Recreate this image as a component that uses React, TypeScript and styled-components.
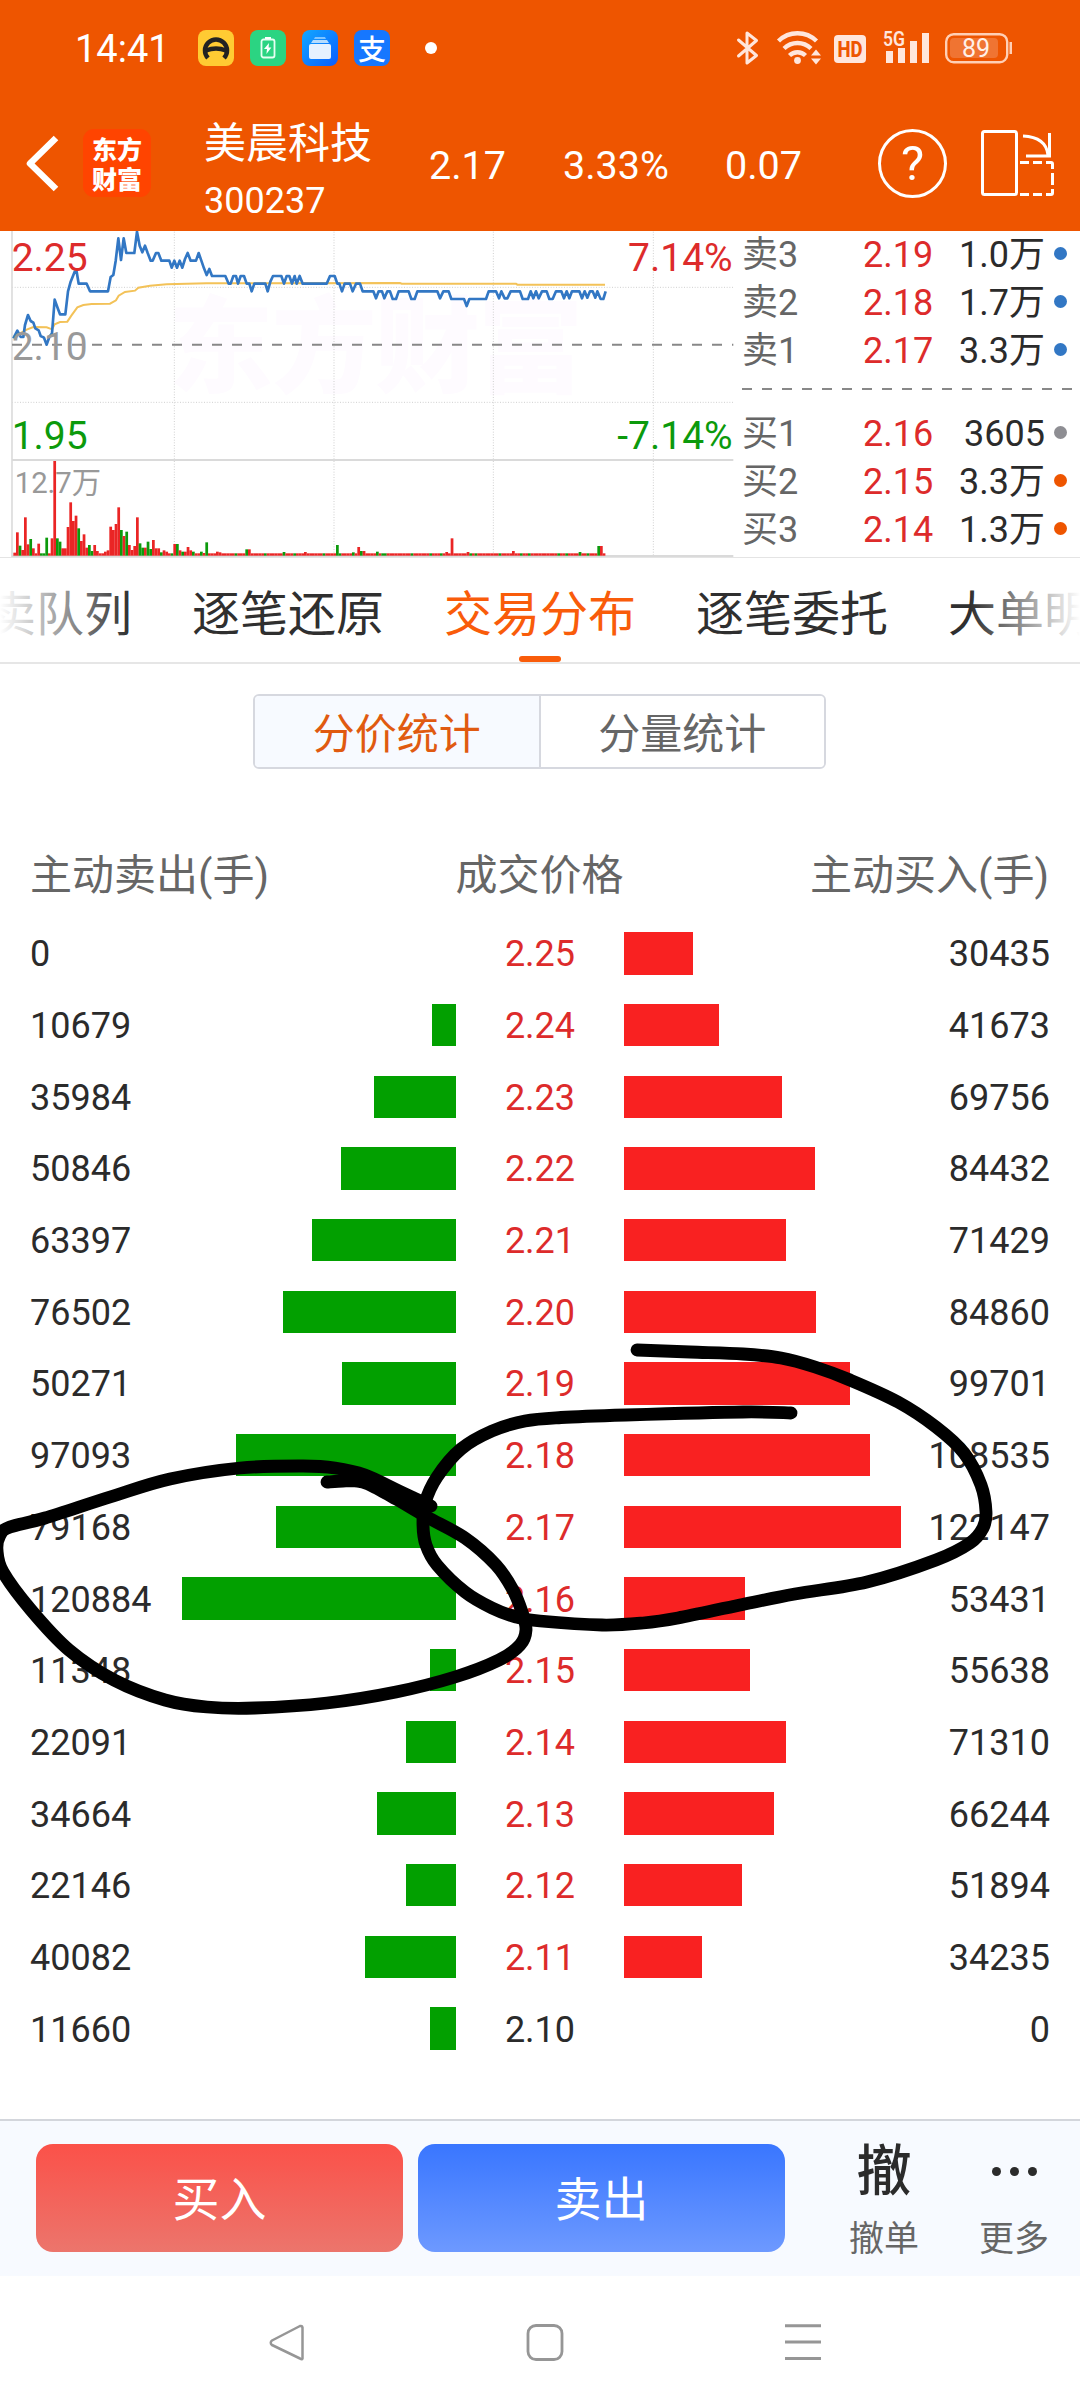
import React from "react";
import styled, { createGlobalStyle } from "styled-components";

const GlobalStyle = createGlobalStyle`
  * { box-sizing: border-box; }
  body {
    margin: 0;
    background: #fff;
    font-family: Roboto, "Noto Sans CJK SC", sans-serif;
    color: #2b2b2b;
  }
`;

const Screen = styled.div`
  position: relative;
  display: flex;
  flex-direction: column;
  width: 1080px;
  height: 2408px;
  overflow: hidden;
  background: #fff;
`;

/* ---------- status bar ---------- */

const Top = styled.header`
  height: 231px;
  flex: none;
  background: #ee5500;
  color: #fff;
`;

const StatusBar = styled.div`
  display: flex;
  justify-content: space-between;
  align-items: center;
  height: 96px;
  padding: 0 66px 0 75px;
`;

const Cluster = styled.div`
  display: flex;
  align-items: center;
`;

const Clock = styled.span`
  width: 123px;
  font-size: 38px;
  line-height: 96px;
  padding-top: 2px;
`;

const AppBadges = styled.div`
  display: flex;
  gap: 16px;
`;

const AppBadge = styled.div<{ $bg: string }>`
  width: 36px;
  height: 36px;
  border-radius: 8px;
  background: ${(p) => p.$bg};
  display: flex;
  align-items: center;
  justify-content: center;
  svg { display: block; }
`;

const PayGlyph = styled.span`
  font: 500 28px/34px "Noto Sans CJK SC", sans-serif;
`;

const Dot = styled.i<{ $size: number; $color: string }>`
  display: block;
  flex: none;
  width: ${(p) => p.$size}px;
  height: ${(p) => p.$size}px;
  border-radius: 50%;
  background: ${(p) => p.$color};
`;

const NoticeDot = styled(Dot)`
  margin-left: 35px;
`;

/* ---------- title bar ---------- */

const TitleBar = styled.div`
  display: flex;
  align-items: center;
  height: 134px;
  padding-left: 23px;
`;

const Logo = styled.div`
  width: 68px;
  height: 68px;
  margin-left: 22px;
  padding-top: 4px;
  border-radius: 11px;
  background: #ff4400;
  text-align: center;
  font: 900 25px/30px "Noto Sans CJK SC", sans-serif;
`;

const Stock = styled.div`
  width: 225px;
  margin-left: 53px;
  padding-top: 18px;
`;

const StockName = styled.div`
  font-size: 42px;
  line-height: 58px;
`;

const StockCode = styled.div`
  font-size: 36px;
  line-height: 56px;
`;

const Quote = styled.span<{ $width: number }>`
  width: ${(p) => p.$width}px;
  font-size: 39.5px;
  line-height: 60px;
  padding-top: 5px;
`;

const Help = styled.div`
  width: 69px;
  height: 69px;
  border: 3px solid #fff;
  border-radius: 50%;
  text-align: center;
  font-size: 49px;
  line-height: 64px;
`;

const RotateIcon = styled.svg`
  margin-left: 33px;
`;

/* ---------- quote panel ---------- */

const QuotePanel = styled.section`
  display: flex;
  flex: none;
  height: 327px;
  border-bottom: 1px solid #e4e4e4;
`;

const OrderBook = styled.div`
  width: 340px;
  padding: 0 4px 0 2px;
`;

const OrderRow = styled.div`
  display: grid;
  grid-template-columns: 121px 91px 91px 1fr;
  align-items: center;
  height: 48px;
  font-size: 36px;
  line-height: 48px;
`;

const OrderSide = styled.span`
  color: #666;
`;

const OrderPrice = styled.span`
  color: #dd2b2b;
`;

const OrderVolume = styled.span`
  text-align: right;
`;

const OrderDot = styled(Dot)`
  margin: -4px 0 0 9px;
`;

const OrderDivider = styled.div`
  height: 2px;
  margin: 13px 0 20px;
  background: repeating-linear-gradient(90deg, #888 0 10px, transparent 10px 20px);
`;

/* ---------- tabs ---------- */

const Tabs = styled.nav`
  position: relative;
  display: flex;
  justify-content: center;
  gap: 60px;
  flex: none;
  height: 106px;
  border-bottom: 2px solid #e6e6e6;
  overflow: hidden;
  &::before, &::after {
    content: "";
    position: absolute;
    z-index: 1;
    top: 0;
    bottom: 0;
    width: 130px;
  }
  &::before { left: 0; background: linear-gradient(90deg, #fff, rgba(255,255,255,0)); }
  &::after { right: 0; width: 110px; background: linear-gradient(270deg, #fff, rgba(255,255,255,0)); }
`;

const Tab = styled.div<{ $active?: boolean }>`
  display: flex;
  flex-direction: column;
  align-items: center;
  justify-content: space-between;
  flex: none;
  width: 192px;
  white-space: nowrap;
  font-size: 48px;
  line-height: 70px;
  padding-top: 22px;
  color: ${(p) => (p.$active ? "#f95c0a" : "#2f2f2f")};
`;

const TabMark = styled.i`
  width: 42px;
  height: 6px;
  border-radius: 3px;
  background: #f95c0a;
`;

/* ---------- segmented control ---------- */

const Segments = styled.div`
  display: flex;
  flex: none;
  width: 573px;
  height: 75px;
  margin: 30px auto 0 253px;
  border: 2px solid #d6d8df;
  border-radius: 6px;
  overflow: hidden;
`;

const Segment = styled.div<{ $active?: boolean }>`
  flex: 1;
  text-align: center;
  font-size: 42px;
  line-height: 78px;
  color: ${(p) => (p.$active ? "#e05a10" : "#666")};
  background: ${(p) => (p.$active ? "#f7faff" : "#fff")};
  & + & { border-left: 2px solid #d6d8df; }
`;

/* ---------- distribution ---------- */

const ColumnHeads = styled.div`
  display: grid;
  grid-template-columns: 1fr 200px 1fr;
  flex: none;
  padding: 0 31px 0 30px;
  margin-top: 76px;
  font-size: 42px;
  line-height: 62px;
  color: #666;
  span:nth-child(2) { text-align: center; }
  span:nth-child(3) { text-align: right; }
`;

const Levels = styled.div`
  flex: none;
  margin-top: 10.5px;
`;

const Level = styled.div`
  display: grid;
  grid-template-columns: 151px 275px 168px 277px 149px;
  align-items: center;
  height: 71.7px;
  padding: 0 30px;
  font-size: 36px;
  line-height: 42px;
`;

const Amount = styled.span<{ $right?: boolean }>`
  padding-top: 2px;
  text-align: ${(p) => (p.$right ? "right" : "left")};
`;

const Price = styled.span<{ $flat?: boolean }>`
  padding-top: 2px;
  text-align: center;
  color: ${(p) => (p.$flat ? "#2b2b2b" : "#dd2b2b")};
`;

const Bar = styled.i<{ $sell?: boolean }>`
  display: block;
  height: 42.4px;
  background: ${(p) => (p.$sell ? "#02a000" : "#f92121")};
  justify-self: ${(p) => (p.$sell ? "end" : "start")};
`;

/* ---------- bottom ---------- */

const ActionBar = styled.footer`
  display: flex;
  flex: none;
  height: 157px;
  margin-top: auto;
  padding: 23px 0 0 36px;
  border-top: 2px solid #d3d6dc;
  background: #f7faff;
`;

const TradeButton = styled.div<{ $from: string; $to: string }>`
  width: 367px;
  height: 108px;
  margin-right: 15px;
  border-radius: 17px;
  background: linear-gradient(${(p) => p.$from}, ${(p) => p.$to});
  color: #fff;
  text-align: center;
  font-size: 47px;
  line-height: 112px;
`;

const Action = styled.div<{ $left: number }>`
  display: flex;
  flex-direction: column;
  align-items: center;
  width: 72px;
  margin-left: ${(p) => p.$left}px;
`;

const ActionIcon = styled.div`
  display: flex;
  align-items: center;
  justify-content: center;
  gap: 9px;
  height: 54px;
  font-size: 55px;
  font-weight: 500;
  line-height: 54px;
`;

const ActionLabel = styled.div`
  margin-top: 17px;
  font-size: 35px;
  line-height: 50px;
  color: #666;
`;

const SystemNav = styled.div`
  display: flex;
  flex: none;
  justify-content: space-between;
  height: 132px;
  padding: 48px 258px 0 268px;
`;

const Ink = styled.svg`
  position: absolute;
  left: 0;
  top: 0;
  pointer-events: none;
`;

/* ---------- data ---------- */

const asks = [["卖3", "2.19", "1.0万"], ["卖2", "2.18", "1.7万"], ["卖1", "2.17", "3.3万"]];
const bids = [["买1", "2.16", "3605"], ["买2", "2.15", "3.3万"], ["买3", "2.14", "1.3万"]];

const levels: [number, string, number][] = [
  [0, "2.25", 30435], [10679, "2.24", 41673], [35984, "2.23", 69756], [50846, "2.22", 84432],
  [63397, "2.21", 71429], [76502, "2.20", 84860], [50271, "2.19", 99701], [97093, "2.18", 108535],
  [79168, "2.17", 122147], [120884, "2.16", 53431], [11348, "2.15", 55638], [22091, "2.14", 71310],
  [34664, "2.13", 66244], [22146, "2.12", 51894], [40082, "2.11", 34235], [11660, "2.10", 0],
];
const barWidth = (n: number) => (n / 122147) * 277;

/* Chart units: three per pixel, one minute every eight units. */
const priceLine =
  "40,340 52,317 62,336 70,336 75,300 84,270 92,288 100,293 106,310 116,316 122,333 132,338 140,359 148,336 156,325 164,224 174,252 180,268 196,268 204,199 212,170 224,140 230,140 236,176 260,176 270,199 324,199 332,156 340,150 347,108 355,40 363,105 371,40 379,84 403,84 411,20 419,62 427,82 435,62 443,84 452,107 458,107 468,84 475,84 484,107 508,107 515,128 523,107 531,128 539,107 547,128 555,102 563,84 572,107 588,107 596,84 604,107 612,130 620,150 628,132 636,153 676,153 686,176 692,176 700,153 708,153 714,176 722,153 732,153 740,176 748,176 755,199 763,176 796,176 803,199 811,170 819,153 844,153 852,176 860,153 868,153 876,176 884,153 890,176 899,153 908,176 980,176 990,153 1004,153 1012,176 1018,176 1026,199 1034,176 1050,176 1058,199 1068,176 1080,176 1088,199 1120,199 1128,220 1136,199 1146,199 1153,220 1162,199 1170,199 1178,222 1188,222 1196,199 1226,199 1234,222 1244,222 1252,199 1312,199 1320,220 1330,199 1346,199 1354,222 1392,222 1400,243 1408,222 1458,222 1466,199 1488,199 1497,220 1504,199 1514,220 1522,220 1532,199 1560,199 1568,222 1584,222 1592,199 1600,220 1608,199 1616,220 1626,199 1640,199 1648,222 1658,222 1668,199 1684,199 1692,220 1700,199 1708,220 1716,199 1738,199 1746,220 1754,199 1762,218 1770,199 1778,199 1786,218 1792,199 1802,222 1810,222 1817,199";
const averageLine =
  "40,336 60,325 80,314 100,306 140,307 156,313 164,298 180,291 202,290 214,272 232,247 250,240 275,237 330,236 348,226 356,212 375,201 405,197 415,188 450,182 500,178 620,175 1200,174 1205,176 1548,176 1552,179 1815,179";

const opening =
  "9r 70r 30g 17r 115r 34r 50g 22r 7r 36r 7g 7g 54g 7r 52r 284r 52g 42g 22r 22r 86r 160r 104r 120r 82g 44r 64r 24r 32g 14g 32r 14r 7r 7r 12r 16r 87r 77r 95r 145r 77g 59r 72g 32r 17r 29r 115r 37g 24g 24r 42g 20g 47r 22r 22r 10g 16r 12r 7r 7g 35r 35g 16r 12g 12r 26r 16r 12g 7r 7r 12g 8r 40g".split(" ");
const later: Record<number, string> = {
  76: "12r", 77: "10r", 87: "19g", 88: "19r", 101: "11g", 109: "11r", 121: "32g", 127: "10g",
  129: "26r", 130: "14g", 131: "14r", 136: "12g", 162: "11r", 164: "52r", 170: "11r", 187: "14r",
  212: "11g", 219: "29g", 220: "29r",
};
const volumes = Array.from({ length: 222 }, (_, i) =>
  opening[i] ?? later[i] ?? (i % 11 === 6 || i % 17 === 3 ? "7g" : "7r")
);

type Pt = [number, number];
const leftLoop: Pt[] = [
  [327, 1482], [343, 1481], [355, 1481], [368, 1484], [396, 1499], [427, 1517], [465, 1538], [496, 1565], [513, 1590],
  [522, 1612], [526, 1630], [520, 1645], [499, 1660], [455, 1677], [396, 1692], [327, 1703], [255, 1708],
  [207, 1707], [165, 1700], [114, 1680], [69, 1650], [31, 1610], [3, 1572], [-3, 1550], [0, 1535], [10, 1527],
  [45, 1518], [110, 1497], [170, 1479], [240, 1468], [303, 1466], [335, 1468], [365, 1475], [399, 1491], [431, 1506],
];
const rightLoop: Pt[] = [
  [637, 1350], [690, 1352], [743, 1354], [781, 1358], [815, 1367], [850, 1380], [898, 1402], [936, 1427],
  [964, 1453], [981, 1485], [986, 1512], [983, 1528], [970, 1543], [936, 1560], [867, 1582], [795, 1594],
  [740, 1605], [678, 1618], [643, 1623], [602, 1625], [540, 1621], [516, 1617], [492, 1608], [465, 1592],
  [437, 1565], [426, 1545], [423, 1525], [425, 1503], [437, 1477], [461, 1449], [492, 1431], [525, 1421],
  [561, 1417.5], [626, 1415], [743, 1412], [791, 1413],
];

function smooth(pts: Pt[]) {
  let d = `M${pts[0]}`;
  for (let i = 0; i < pts.length - 1; i++) {
    const a = pts[i - 1] ?? pts[i];
    const b = pts[i];
    const c = pts[i + 1];
    const e = pts[i + 2] ?? c;
    d += `C${b[0] + (c[0] - a[0]) / 6},${b[1] + (c[1] - a[1]) / 6} ${c[0] - (e[0] - b[0]) / 6},${c[1] - (e[1] - b[1]) / 6} ${c}`;
  }
  return d;
}

/* ---------- parts ---------- */

function StatusIcons() {
  return (
    <svg width="280" height="40" viewBox="736 28 280 40" fill="none">
      <path d="M740.500 40l18 15.500-9.500 7.500v-30l9.500 7.500-18 15.500" stroke="#ffe6dc" strokeWidth="3" strokeLinejoin="round" strokeLinecap="round" />
      <g stroke="#ffe6dc" strokeWidth="4.400">
        <path d="M780.500 41a27 27 0 0 1 38 0" />
        <path d="M786 48.500a19.500 19.500 0 0 1 27 0" />
        <path d="M791.500 55.500a11.500 11.500 0 0 1 16 0" />
      </g>
      <circle cx="799.500" cy="60.500" r="3.400" fill="#ffe6dc" />
      <path d="M813 55.500l5-6 5 6zM813 58.500l5 6 5-6z" fill="#ffe6dc" />
      <rect x="836" y="35" width="32" height="28" rx="4" fill="#ffe6dc" />
      <text x="852" y="57" textAnchor="middle" fontSize="22" fontWeight="800" fill="#ee5500" textLength="25" lengthAdjust="spacingAndGlyphs">HD</text>
      <text x="885" y="46" fontSize="21" fontWeight="600" fill="#ffe6dc" textLength="22" lengthAdjust="spacingAndGlyphs">5G</text>
      <path d="M888 51h7v12h-7zM900 48h7v15h-7zM912 41h7v22h-7zM924 33h7v30h-7z" fill="#ffe6dc" />
      <rect x="948.200" y="34.200" width="61" height="28" rx="7.500" stroke="#ffcfb5" strokeWidth="2.400" />
      <rect x="952" y="38" width="48" height="20" rx="4" fill="#f07432" />
      <rect x="1011.500" y="42" width="2.500" height="12" fill="#ffcfb5" />
      <text x="978" y="57" textAnchor="middle" fontSize="25" fill="#fff0e8">89</text>
    </svg>
  );
}

function Chart() {
  return (
    <svg width="740" height="326" viewBox="0 18 2220 978" fill="none">
      <text x="505" y="478" fontSize="315" fontWeight="900" fill="#fefbff" textLength="1245">东方财富</text>
      <g stroke="#cfcfcf" strokeWidth="3" strokeDasharray="3 5">
        <path d="M36 187H2200M36 532H2200M523 20V990M1002 20V990M1480 20V990M1960 20V990" />
      </g>
      <path d="M36 18V996" stroke="#dcdcdc" strokeWidth="5" />
      <path d="M36 705H2200M36 993H2200" stroke="#dadada" strokeWidth="6" />
      <path d="M36 359H2200" stroke="#888" strokeWidth="6" strokeDasharray="30 30" />
      <g fontSize="88" fill="#999">
        <text x="44" y="803">12.7万</text>
      </g>
      {volumes.map((v, i) => {
        const h = parseInt(v, 10);
        return <rect key={i} x={40 + 8 * i} y={992 - h} width={8.2} height={h} fill={v.endsWith("g") ? "#0c9a0c" : "#ea2525"} />;
      })}
      <polyline points={averageLine} stroke="#f3c258" strokeWidth="6" />
      <polyline points={priceLine} stroke="#3277c4" strokeWidth="8" strokeLinejoin="round" />
      <g fontSize="117">
        <text x="35" y="137" fill="#dd2b2b">2.25</text>
        <text x="35" y="404" fill="#999">2.10</text>
        <text x="35" y="672" fill="#0c9a0c">1.95</text>
        <text x="2198" y="137" fill="#dd2b2b" textAnchor="end">7.14%</text>
        <text x="2198" y="672" fill="#0c9a0c" textAnchor="end">-7.14%</text>
      </g>
    </svg>
  );
}

function Orders({ rows, colors }: { rows: string[][]; colors: string[] }) {
  return (
    <>
      {rows.map(([side, price, volume], i) => (
        <OrderRow key={side}>
          <OrderSide>{side}</OrderSide>
          <OrderPrice>{price}</OrderPrice>
          <OrderVolume>{volume}</OrderVolume>
          <OrderDot $size={13} $color={colors[i]} />
        </OrderRow>
      ))}
    </>
  );
}

export default function App() {
  return (
    <Screen>
      <GlobalStyle />
      <Top>
        <StatusBar>
          <Cluster>
            <Clock>14:41</Clock>
            <AppBadges>
              <AppBadge $bg="#ffcb33">
                <svg width="28" height="24" viewBox="0 0 28 24" fill="none" stroke="#222" strokeWidth="4.500">
                  <path d="M6 22A11 11 0 1 1 22 22" />
                  <path d="M4 14.500Q14 10.500 24 14.500" />
                </svg>
              </AppBadge>
              <AppBadge $bg="#2bd482">
                <svg width="16" height="22" viewBox="0 0 16 22">
                  <rect x="1.500" y="2.500" width="13" height="18" rx="2" fill="none" stroke="#e6fff2" strokeWidth="1.800" />
                  <path d="M5 0h6v2H5zM9 6l-5 6h3l-.6 5 5-6.500H8.600z" fill="#fff" />
                </svg>
              </AppBadge>
              <AppBadge $bg="linear-gradient(135deg, #12a8ff, #0a5cff)">
                <svg width="24" height="24" viewBox="0 0 24 24">
                  <path d="M7 1h10l1 2H6z" fill="#7fc4ff" />
                  <path d="M5 4h14l2 3H3z" fill="#b5dcff" />
                  <rect x="1" y="8" width="22" height="15" rx="2" fill="#e6f1ff" />
                </svg>
              </AppBadge>
              <AppBadge $bg="#1677ff">
                <PayGlyph>支</PayGlyph>
              </AppBadge>
            </AppBadges>
            <NoticeDot $size={12} $color="#fff" />
          </Cluster>
          <StatusIcons />
        </StatusBar>
        <TitleBar>
          <svg width="38" height="60" viewBox="0 0 38 60" fill="none" stroke="#fff" strokeWidth="6.500" strokeLinejoin="round">
            <path d="M33 5L7 30.500L33 56" />
          </svg>
          <Logo>东方<br />财富</Logo>
          <Stock>
            <StockName>美晨科技</StockName>
            <StockCode>300237</StockCode>
          </Stock>
          <Quote $width={134}>2.17</Quote>
          <Quote $width={162}>3.33%</Quote>
          <Quote $width={153}>0.07</Quote>
          <Help>?</Help>
          <RotateIcon width="74" height="68" viewBox="0 0 74 68" fill="none" stroke="#fff" strokeWidth="3">
            <rect x="2.500" y="2.500" width="34" height="63" rx="2" />
            <path d="M43 7Q66 8 68 26M69.500 4V27H46" />
            <path d="M40 33.500h9M53 33.500h9M66 33.500h5q1.500 0 1.500 1.500v5M72.500 44v12M72.500 60v4q0 1.500-1.500 1.500h-5M62 65.500h-9M49 65.500h-9" />
          </RotateIcon>
        </TitleBar>
      </Top>

      <QuotePanel>
        <Chart />
        <OrderBook>
          <Orders rows={asks} colors={["#3277c4", "#3277c4", "#3277c4"]} />
          <OrderDivider />
          <Orders rows={bids} colors={["#8e8e93", "#ee5500", "#ee5500"]} />
        </OrderBook>
      </QuotePanel>

      <Tabs>
        <Tab>买卖队列</Tab>
        <Tab>逐笔还原</Tab>
        <Tab $active>交易分布<TabMark /></Tab>
        <Tab>逐笔委托</Tab>
        <Tab>大单明细</Tab>
      </Tabs>

      <Segments>
        <Segment $active>分价统计</Segment>
        <Segment>分量统计</Segment>
      </Segments>

      <ColumnHeads>
        <span>主动卖出(手)</span>
        <span>成交价格</span>
        <span>主动买入(手)</span>
      </ColumnHeads>
      <Levels>
        {levels.map(([sell, price, buy]) => (
          <Level key={price}>
            <Amount>{sell}</Amount>
            <Bar $sell style={{ width: barWidth(sell) }} />
            <Price $flat={price === "2.10"}>{price}</Price>
            <Bar style={{ width: barWidth(buy) }} />
            <Amount $right>{buy}</Amount>
          </Level>
        ))}
      </Levels>

      <ActionBar>
        <TradeButton $from="#fb5149" $to="#ec756c">买入</TradeButton>
        <TradeButton $from="#3976ff" $to="#6d99ff">卖出</TradeButton>
        <Action $left={48}>
          <ActionIcon>撤</ActionIcon>
          <ActionLabel>撤单</ActionLabel>
        </Action>
        <Action $left={58}>
          <ActionIcon>
            <Dot $size={9} $color="#2b2b2b" />
            <Dot $size={9} $color="#2b2b2b" />
            <Dot $size={9} $color="#2b2b2b" />
          </ActionIcon>
          <ActionLabel>更多</ActionLabel>
        </Action>
      </ActionBar>
      <SystemNav>
        <svg width="38" height="38" viewBox="0 0 38 38" fill="none" stroke="#969696" strokeWidth="2.500" strokeLinejoin="round">
          <path d="M34.500 3.500V34.500Q34 36 32 34.500L4 21Q1.500 18.500 4 16.500L32 2Q34 1.500 34.500 3.500Z" />
        </svg>
        <svg width="38" height="38" viewBox="0 0 38 38" fill="none" stroke="#969696" strokeWidth="2.800">
          <rect x="2" y="1.500" width="34" height="34" rx="8" />
        </svg>
        <svg width="38" height="38" viewBox="0 0 38 38" stroke="#969696" strokeWidth="3">
          <path d="M1 1.800h36M1 18h36M1 34.500h36" />
        </svg>
      </SystemNav>

      <Ink width="1080" height="2408" fill="none" stroke="#000" strokeWidth="12.800" strokeLinecap="round" strokeLinejoin="round">
        <path d={smooth(leftLoop)} />
        <path d={smooth(rightLoop)} />
      </Ink>
    </Screen>
  );
}
